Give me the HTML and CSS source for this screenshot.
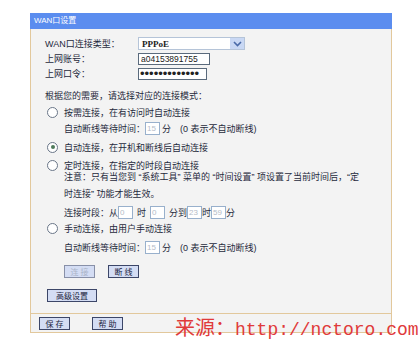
FILE: index.html
```html
<!DOCTYPE html>
<html lang="zh-CN">
<head>
<meta charset="utf-8">
<title>WAN口设置</title>
<link rel="stylesheet" href="styles.css">
</head>
<body>
<div class="page">
  <div class="panel">
    <div class="title">WAN口设置</div>
    <div class="content">
      <div class="frow"><span class="flabel">WAN口连接类型：</span>
        <div class="select"><span class="sval">PPPoE</span><span class="sbtn"><svg width="9" height="6" viewBox="0 0 9 6"><path d="M1 1 L4.5 4.5 L8 1" fill="none" stroke="#4a6aa8" stroke-width="1.6"/></svg></span></div>
      </div>
      <div class="frow"><span class="flabel">上网账号：</span><input class="txt acct" type="text" value="a04153891755"></div>
      <div class="frow"><span class="flabel">上网口令：</span><input class="txt pwd" type="password" value="1234567890123"></div>

      <div class="row intro">根据您的需要，请选择对应的连接模式：</div>
      <div class="row m1"><input class="radio" type="radio" name="mode"><span>按需连接，在有访问时自动连接</span></div>
      <div class="row sub"><span>自动断线等待时间：</span><input class="num" type="text" value="15" disabled><span class="unit">分</span><span class="hint">(0 表示不自动断线)</span></div>
      <div class="row m3"><input class="radio" type="radio" name="mode" checked><span>自动连接，在开机和断线后自动连接</span></div>
      <div class="row m2"><input class="radio" type="radio" name="mode"><span>定时连接，在指定的时段自动连接</span></div>
      <p class="note">注意：只有当您到 “系统工具” 菜单的 “时间设置” 项设置了当前时间后，“定<br>时连接” 功能才能生效。</p>
      <div class="row sub m1">连接时段：从<input class="num" type="text" value="0" disabled><span class="tw">时</span><input class="num" type="text" value="0" disabled><span class="tw2">分到</span><input class="num" type="text" value="23" disabled><span>时</span><input class="num" type="text" value="59" disabled><span>分</span></div>
      <div class="row"><input class="radio" type="radio" name="mode"><span>手动连接，由用户手动连接</span></div>
      <div class="row sub m3"><span>自动断线等待时间：</span><input class="num" type="text" value="15" disabled><span class="unit">分</span><span class="hint">(0 表示不自动断线)</span></div>
      <div class="row sub btns"><button class="btn off" disabled>连 接</button><button class="btn">断 线</button></div>
      <div class="row adv"><button class="btn wide">高级设置</button></div>
    </div>
    <div class="footer"><button class="btn">保 存</button><button class="btn">帮 助</button></div>
  </div>
  <div class="mark"><span class="mcjk">来源：</span><span class="mlat">http://nctoro.com</span></div>
</div>
</body>
</html>
```
FILE: styles.css
```css
html, body { margin: 0; padding: 0; background: #ffffff; }
.page { position: relative; width: 420px; height: 342px; overflow: hidden; padding: 13px 0 0 30px; box-sizing: border-box; font-family: "Liberation Sans", "Noto Sans CJK SC", sans-serif; font-size: 9px; color: #1f2a3c; }
.panel { width: 362px; box-sizing: border-box; }
.title { height: 16px; background: #5b8def; color: #ffffff; font-size: 8px; line-height: 16px; padding-left: 4px; }
.content { background: #f3f3f3; border-left: 1px solid #e2c89c; border-right: 1px solid #e2c89c; padding: 7px 0 10px 14px; height: 284px; box-sizing: border-box; }
.frow { height: 15px; display: flex; align-items: center; }
.flabel { width: 93px; }
.select { width: 107px; height: 13px; box-sizing: border-box; background: #fff; border: 1px solid #b5c4d8; display: flex; align-items: center; justify-content: space-between; }
.sval { padding-left: 3px; font-family: "Liberation Serif", serif; font-size: 9px; font-weight: bold; color: #222; }
.sbtn { width: 14px; height: 11px; background: #c9d8f4; display: flex; align-items: center; justify-content: center; }
.txt { height: 12px; box-sizing: border-box; border: 1px solid #5a6a7c; padding: 0 2px; margin: 0; font-family: "Liberation Sans", sans-serif; font-size: 8.5px; color: #222; background: #fff; outline: none; }
.acct { width: 72px; }
.pwd { width: 69px; font-size: 13px; line-height: 10px; padding: 0 1px; letter-spacing: 0; }
.row { height: 16px; display: flex; align-items: center; }
.intro { margin-top: 6px; }
.m1 { margin-top: 1px; }
.m2 { margin-top: 2px; }
.m3 { margin-top: 3px; }
.radio { appearance: none; -webkit-appearance: none; width: 11px; height: 11px; margin: 0 6px 0 2px; border: 1px solid #6a7688; border-radius: 50%; background: #fff; box-sizing: border-box; position: relative; }
.radio:checked::after { content: ""; position: absolute; left: 2.5px; top: 2.5px; width: 4px; height: 4px; border-radius: 50%; background: #4e7a5a; }
.sub { padding-left: 19px; }
.num { width: 15px; height: 13px; box-sizing: border-box; margin: 0; padding: 0 1px; border: 1px solid #98b0cc; background: #fff; color: #b4bcc8; font-family: "Liberation Sans", sans-serif; font-size: 8px; }
.unit { margin-left: 2px; }
.hint { margin-left: 9px; }
.tw { margin: 0 4px; }
.tw2 { margin-left: 4px; }
.note { margin: -4px 0 0 0; padding-left: 19px; line-height: 17px; }
.btns { margin-top: 8px; gap: 13px; }
.btn { height: 13px; width: 31px; box-sizing: border-box; margin: 0; padding: 0; border: 1px solid #3c4668; background: #d4ddf4; font-family: "Noto Sans CJK SC", sans-serif; font-size: 8px; line-height: 11px; color: #1c2440; }
.off { color: #aab4c8; border-color: #8890a8; }
.adv { margin-top: 8px; padding-left: 2px; }
.wide { width: 50px; }
.footer { height: 20px; box-sizing: border-box; background: #f3f3f3; border: 1px solid #e2c89c; display: flex; align-items: center; gap: 22px; padding-left: 8px; }
.mark { position: absolute; left: 175px; top: 314px; color: #e03a3a; white-space: nowrap; line-height: 26px; }
.mcjk { font-family: "Noto Sans CJK SC", sans-serif; font-size: 20px; }
.mlat { font-family: "Liberation Mono", monospace; font-size: 18px; }
```
